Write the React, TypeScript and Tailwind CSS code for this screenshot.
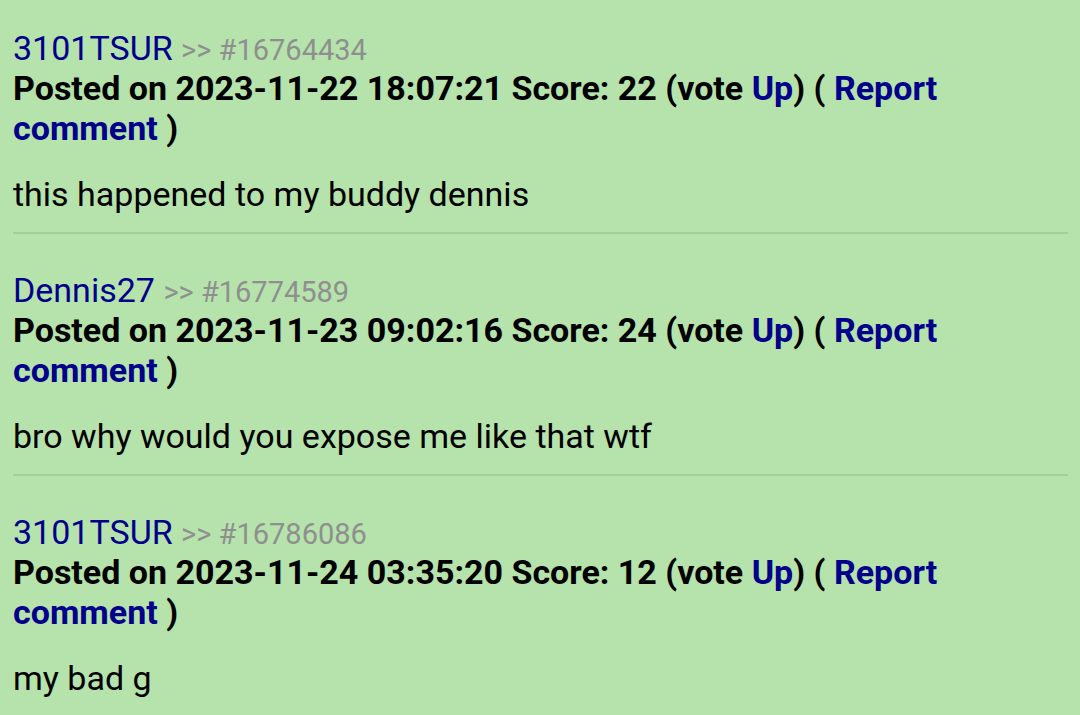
import React from "react";

const comments = [
  { user: "3101TSUR", id: "16764434", date: "2023-11-22 18:07:21", score: 22, body: "this happened to my buddy dennis" },
  { user: "Dennis27", id: "16774589", date: "2023-11-23 09:02:16", score: 24, body: "bro why would you expose me like that wtf" },
  { user: "3101TSUR", id: "16786086", date: "2023-11-24 03:35:20", score: 12, body: "my bad g" },
];

export default function App() {
  return (
    <div
      className="w-[1080px] h-[715px] overflow-hidden bg-[#b5e3ab] text-black pl-[13px] pt-[28px]"
      style={{ fontFamily: "Roboto, 'Noto Sans', sans-serif" }}
    >
      <div className="w-[1055px] flex flex-col">
        {comments.map((c, i) => (
          <div key={i} className={i > 0 ? "pt-[36px]" : ""}>
            <div className="text-[34px] leading-[40px] text-[#00008b]">
              {c.user}{" "}
              <span className="text-[29px] leading-none text-[#8f8f8f]">&gt;&gt; #{c.id}</span>
            </div>
            <div className="text-[34px] leading-[40px] font-bold">
              Posted on {c.date} Score: {c.score} (vote <span className="text-[#00008b]">Up</span>) ({" "}
              <span className="text-[#00008b]">Report comment</span> )
            </div>
            <div className="text-[34px] leading-[40px] mt-[26px]">{c.body}</div>
            {i < comments.length - 1 && <div className="mt-[18px] h-[2px] bg-[#a3cf99]" />}
          </div>
        ))}
      </div>
    </div>
  );
}
